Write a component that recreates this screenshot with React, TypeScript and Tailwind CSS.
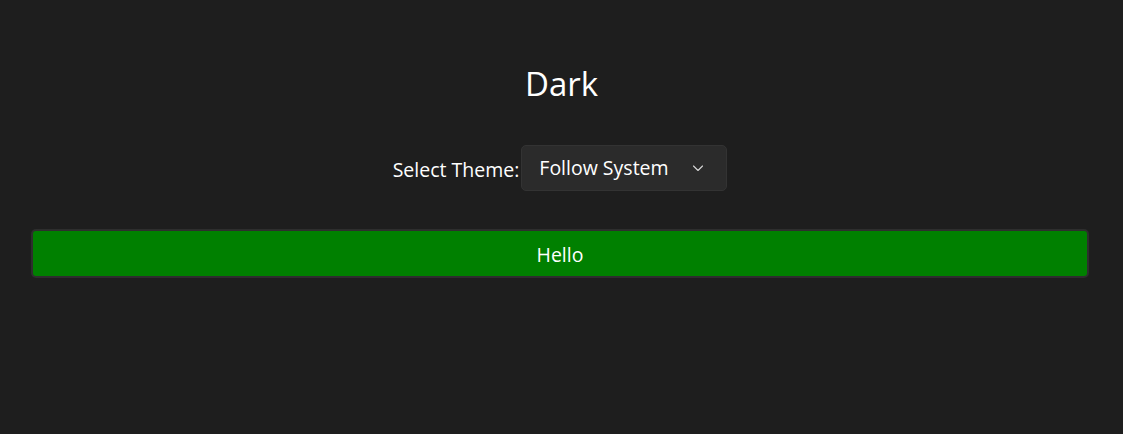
import React from 'react';

const Chevron: React.FC = () => (
  <svg width="12" height="12" viewBox="0 0 12 12" fill="none" className="text-[#d6d6d6]">
    <path d="M1.5 4l4.5 4.5L10.5 4" stroke="currentColor" strokeWidth="1.1" strokeLinecap="round" strokeLinejoin="round" />
  </svg>
);

const App: React.FC = () => {
  return (
    <div
      className="w-[1123px] h-[434px] bg-[#1e1e1e] text-white flex flex-col items-center"
      style={{ fontFamily: '"Open Sans", "Noto Sans", sans-serif' }}
    >
      <h1 className="mt-[62px] h-[44px] leading-[44px] text-[33px] font-normal">Dark</h1>

      <div className="mt-[39px] mr-[3px] flex items-center">
        <span className="text-[19.5px] leading-[26px] mt-[3px]">Select Theme:</span>
        <button className="ml-[2px] w-[206px] h-[46px] flex items-center justify-between pl-[17px] pr-[22px] bg-[#2b2b2b] border border-[#333333] rounded-[5px] text-[19.5px]">
          <span>Follow System</span>
          <Chevron />
        </button>
      </div>

      <div className="mt-[38px] w-full pl-[31px] pr-[34px]">
        <button className="w-full h-[49px] pt-[2px] bg-[#008000] border-2 border-[#2e2e2e] rounded-[5px] text-[19.5px] flex items-center justify-center">
          Hello
        </button>
      </div>
    </div>
  );
};

export default App;
